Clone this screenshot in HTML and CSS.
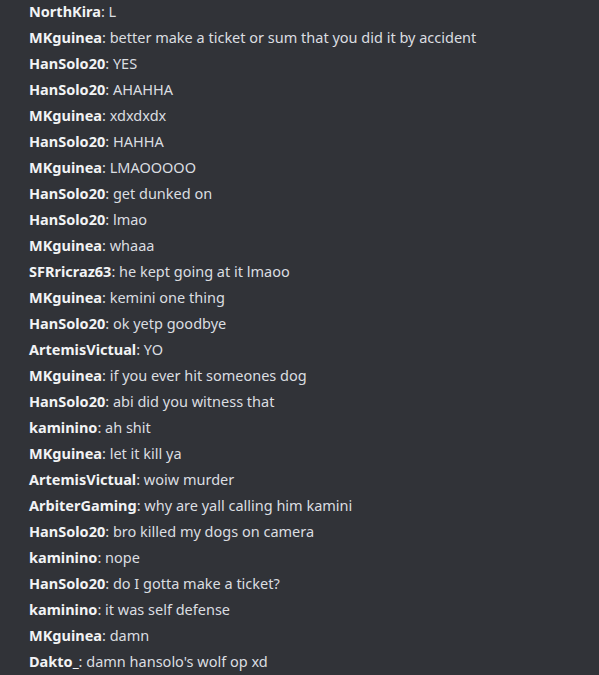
FILE: index.html
```html
<!DOCTYPE html>
<html>
<head>
<meta charset="utf-8">
<link rel="stylesheet" href="styles.css">
</head>
<body>
<div class="log">
<div class="line"><span class="name">NorthKira</span>: L</div>
<div class="line"><span class="name">MKguinea</span>: better make a ticket or sum that you did it by accident</div>
<div class="line"><span class="name">HanSolo20</span>: YES</div>
<div class="line"><span class="name">HanSolo20</span>: AHAHHA</div>
<div class="line"><span class="name">MKguinea</span>: xdxdxdx</div>
<div class="line"><span class="name">HanSolo20</span>: HAHHA</div>
<div class="line"><span class="name">MKguinea</span>: LMAOOOOO</div>
<div class="line"><span class="name">HanSolo20</span>: get dunked on</div>
<div class="line"><span class="name">HanSolo20</span>: lmao</div>
<div class="line"><span class="name">MKguinea</span>: whaaa</div>
<div class="line"><span class="name">SFRricraz63</span>: he kept going at it lmaoo</div>
<div class="line"><span class="name">MKguinea</span>: kemini one thing</div>
<div class="line"><span class="name">HanSolo20</span>: ok yetp goodbye</div>
<div class="line"><span class="name">ArtemisVictual</span>: YO</div>
<div class="line"><span class="name">MKguinea</span>: if you ever hit someones dog</div>
<div class="line"><span class="name">HanSolo20</span>: abi did you witness that</div>
<div class="line"><span class="name">kaminino</span>: ah shit</div>
<div class="line"><span class="name">MKguinea</span>: let it kill ya</div>
<div class="line"><span class="name">ArtemisVictual</span>: woiw murder</div>
<div class="line"><span class="name">ArbiterGaming</span>: why are yall calling him kamini</div>
<div class="line"><span class="name">HanSolo20</span>: bro killed my dogs on camera</div>
<div class="line"><span class="name">kaminino</span>: nope</div>
<div class="line"><span class="name">HanSolo20</span>: do I gotta make a ticket?</div>
<div class="line"><span class="name">kaminino</span>: it was self defense</div>
<div class="line"><span class="name">MKguinea</span>: damn</div>
<div class="line"><span class="name">Dakto_</span>: damn hansolo's wolf op xd</div>
</div>
</body>
</html>
```
FILE: styles.css
```css
html, body {
  margin: 0;
  padding: 0;
  background: #313338;
  height: 100%;
}
body {
  font-family: "Noto Sans", "Open Sans", sans-serif;
  font-size: 14.5px;
  color: #dbdee1;
}
.log {
  margin-top: -2px;
  padding-left: 29px;
  display: flex;
  flex-direction: column;
}
.line {
  height: 26px;
  line-height: 26px;
  white-space: nowrap;
}
.name {
  font-weight: 700;
  color: #f2f3f5;
}
```
